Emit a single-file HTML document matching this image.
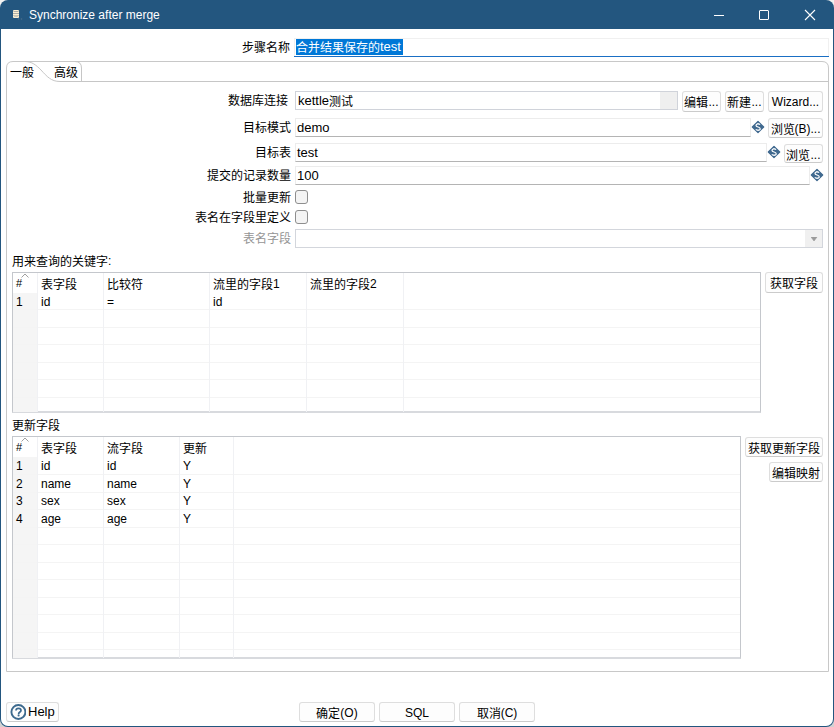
<!DOCTYPE html>
<html lang="zh-CN"><head><meta charset="utf-8"><style>
*{box-sizing:border-box;margin:0;padding:0}
html,body{width:834px;height:727px;overflow:hidden;background:linear-gradient(#f2f2f2,#d2d2d2)}
body{position:relative;font-family:"Liberation Sans",sans-serif;font-size:12px;color:#000}
.a{position:absolute}
.t{position:absolute;white-space:nowrap;line-height:16px}
.r{text-align:right}
.inp{position:absolute;background:#fff;border:1px solid #ececec;border-bottom-color:#b4b4b4}
.btn{position:absolute;background:#fdfdfd;border:1px solid #dedede;border-bottom-color:#cbcbcb;border-radius:3px;text-align:center;white-space:nowrap}
.btn>span{position:absolute;left:0;right:0;top:2px;line-height:16px}
.chk{position:absolute;width:13px;height:14px;border:1px solid #8e8e8e;border-radius:3px;background:#f4f4f4}
.grid{position:absolute;border:1px solid #c4c7cc;border-bottom:2px solid #d8dade;background:#fff;overflow:hidden}
.vl{position:absolute;width:1px;background:#f0f1f4}
.hl{position:absolute;height:1px;background:#f4f4f4}
.c{position:relative;top:1px}
</style></head><body>
<div class="a" style="left:0;top:0;width:834px;height:727px;background:#23567f;border-radius:8px"></div>
<div class="a" style="left:1px;top:29px;width:832px;height:697px;background:#fff;border-radius:0 0 7px 7px"></div>
<svg class="a" style="left:13px;top:10px" width="10" height="10" viewBox="0 0 10 10"><rect x="0" y="0" width="6" height="8" rx="1" fill="#fcefd2"/><rect x="0.5" y="1.3" width="5" height="0.7" fill="#8d949a"/><rect x="0" y="3.3" width="6" height="0.7" fill="#8d949a"/><rect x="0" y="5.3" width="6" height="0.6" fill="#a7aba9"/><path d="M1 6.2 Q3 7.2 5 6.2" stroke="#a7aba9" stroke-width="0.6" fill="none"/><circle cx="5.5" cy="9" r="0.8" fill="#4a6d8a"/><circle cx="8.5" cy="9" r="0.8" fill="#4a6d8a"/></svg>
<div class="t" style="left:29px;top:7px;color:#fff">Synchronize after merge</div>
<div class="a" style="left:714px;top:15px;width:10px;height:1px;background:#fff"></div>
<div class="a" style="left:759px;top:10px;width:10px;height:10px;border:1px solid #fff;border-radius:1px"></div>
<svg class="a" style="left:804px;top:9px" width="12" height="12" viewBox="0 0 12 12"><path d="M1 1L11 11M11 1L1 11" stroke="#fff" stroke-width="1.1"/></svg>
<div class="t r" style="right:544px;top:39px;color:#000"><span class="c">步骤名称</span></div>
<div class="a" style="left:294px;top:38px;width:535px;height:19px;border:1px solid #f0f0f0;border-bottom:none"></div>
<div class="a" style="left:294px;top:56px;width:535px;height:1px;background:#1a6fc4"></div>
<div class="t" style="left:296px;top:39px;background:#0078d7;color:#fff;line-height:16px;padding-right:2px"><span class="c">合并结果保存的</span><span style="font-size:13px">test</span></div>
<svg class="a" style="left:0;top:0" width="834" height="727">
<path d="M6.5 671.5 V68 Q6.5 61.5 13 61.5 H822 Q828.5 61.5 828.5 68 V671.5 Z" fill="none" stroke="#c8c8c8"/>
<path d="M25 61.5 C32 61.5 36 65 41 70 C47 76.5 51 81.5 60 81.5 H828.5" fill="none" stroke="#c6c6c6"/>
<path d="M75 61.5 Q81.5 61.5 81.5 68 V81.5" fill="none" stroke="#c6c6c6"/>
</svg>
<div class="t" style="left:10px;top:64px"><span class="c">一般</span></div>
<div class="t" style="left:54px;top:64px"><span class="c">高级</span></div>
<div class="t r" style="right:546px;top:92px;color:#000"><span class="c">数据库连接</span></div>
<div class="inp" style="left:295px;top:91px;width:383px;height:19px;border:1px solid #d0d3da"></div>
<div class="a" style="left:660px;top:92px;width:17px;height:17px;background:#efefef"></div>
<div class="t" style="left:298px;top:93px"><span style="font-size:13px">kettle</span><span class="c">测试</span></div>
<div class="btn" style="left:682px;top:91px;width:39px;height:21px"><span><span class="c">编辑</span>...</span></div>
<div class="btn" style="left:725px;top:91px;width:39px;height:21px"><span><span class="c">新建</span>...</span></div>
<div class="btn" style="left:768px;top:91px;width:55px;height:21px"><span>Wizard...</span></div>
<div class="t r" style="right:543px;top:119px;color:#000"><span class="c">目标模式</span></div>
<div class="inp" style="left:295px;top:118px;width:456px;height:19px;"></div>
<div class="t" style="left:297px;top:120px;font-size:13px">demo</div>
<svg class="a" style="left:751px;top:120px" width="14" height="14" viewBox="0 0 14 14"><path d="M7 1.3 L12.7 7 L7 12.7 L1.3 7 Z" fill="#40698f" stroke="#40698f" stroke-width="1.2" stroke-linejoin="round"/><path d="M9 4.7 C8.6 4.1 8 3.9 7 3.9 C5.8 3.9 5 4.6 5 5.4 C5 7.4 9.2 6.6 9.2 8.7 C9.2 9.7 8.3 10.2 7 10.2 C6 10.2 5.3 9.9 4.8 9.3 M7 3 V3.9 M7 10.2 V11" fill="none" stroke="#fff" stroke-width="1.2"/></svg>
<div class="btn" style="left:768px;top:118px;width:55px;height:20px"><span><span class="c">浏览</span>(B)...</span></div>
<div class="t r" style="right:543px;top:144px;color:#000"><span class="c">目标表</span></div>
<div class="inp" style="left:295px;top:143px;width:472px;height:19px;"></div>
<div class="t" style="left:297px;top:145px;font-size:13px">test</div>
<svg class="a" style="left:767px;top:145px" width="14" height="14" viewBox="0 0 14 14"><path d="M7 1.3 L12.7 7 L7 12.7 L1.3 7 Z" fill="#40698f" stroke="#40698f" stroke-width="1.2" stroke-linejoin="round"/><path d="M9 4.7 C8.6 4.1 8 3.9 7 3.9 C5.8 3.9 5 4.6 5 5.4 C5 7.4 9.2 6.6 9.2 8.7 C9.2 9.7 8.3 10.2 7 10.2 C6 10.2 5.3 9.9 4.8 9.3 M7 3 V3.9 M7 10.2 V11" fill="none" stroke="#fff" stroke-width="1.2"/></svg>
<div class="btn" style="left:784px;top:144px;width:39px;height:19px"><span><span class="c">浏览</span>...</span></div>
<div class="t r" style="right:543px;top:167px;color:#000"><span class="c">提交的记录数量</span></div>
<div class="inp" style="left:295px;top:166px;width:515px;height:19px;"></div>
<div class="t" style="left:297px;top:168px;font-size:13px">100</div>
<svg class="a" style="left:810px;top:168px" width="14" height="14" viewBox="0 0 14 14"><path d="M7 1.3 L12.7 7 L7 12.7 L1.3 7 Z" fill="#40698f" stroke="#40698f" stroke-width="1.2" stroke-linejoin="round"/><path d="M9 4.7 C8.6 4.1 8 3.9 7 3.9 C5.8 3.9 5 4.6 5 5.4 C5 7.4 9.2 6.6 9.2 8.7 C9.2 9.7 8.3 10.2 7 10.2 C6 10.2 5.3 9.9 4.8 9.3 M7 3 V3.9 M7 10.2 V11" fill="none" stroke="#fff" stroke-width="1.2"/></svg>
<div class="t r" style="right:543px;top:189px;color:#000"><span class="c">批量更新</span></div>
<div class="chk" style="left:295px;top:190px"></div>
<div class="t r" style="right:543px;top:209px;color:#000"><span class="c">表名在字段里定义</span></div>
<div class="chk" style="left:295px;top:210px"></div>
<div class="t r" style="right:543px;top:230px;color:#959595"><span class="c">表名字段</span></div>
<div class="a" style="left:295px;top:229px;width:528px;height:19px;border:1px solid #d3d6dc;background:#fff"></div>
<div class="a" style="left:805px;top:230px;width:17px;height:17px;background:#f0f0f0"></div>
<svg class="a" style="left:811px;top:237px" width="7" height="5"><path d="M0 0H6L3 4Z" fill="#9a9a9a" stroke="#9a9a9a" stroke-width="0.6" stroke-linejoin="round"/></svg>
<div class="t" style="left:12px;top:253px"><span class="c">用来查询的关键字</span>:</div>
<div class="grid" style="left:12px;top:272px;width:749px;height:141px"></div>
<div class="a" style="left:13px;top:293px;width:24px;height:119px;background:#f5f5f5"></div>
<div class="hl" style="left:13px;top:309px;width:747px"></div>
<div class="hl" style="left:13px;top:327px;width:747px"></div>
<div class="hl" style="left:13px;top:344px;width:747px"></div>
<div class="hl" style="left:13px;top:362px;width:747px"></div>
<div class="hl" style="left:13px;top:379px;width:747px"></div>
<div class="hl" style="left:13px;top:397px;width:747px"></div>
<div class="vl" style="left:37px;top:273px;height:139px"></div>
<div class="vl" style="left:103px;top:273px;height:139px"></div>
<div class="vl" style="left:209px;top:273px;height:139px"></div>
<div class="vl" style="left:306px;top:273px;height:139px"></div>
<div class="vl" style="left:403px;top:273px;height:139px"></div>
<div class="t" style="left:16px;top:275px;font-size:11px">#</div>
<div class="t" style="left:41px;top:276px"><span class="c">表字段</span></div>
<div class="t" style="left:107px;top:276px"><span class="c">比较符</span></div>
<div class="t" style="left:213px;top:276px"><span class="c">流里的字段</span>1</div>
<div class="t" style="left:310px;top:276px"><span class="c">流里的字段</span>2</div>
<svg class="a" style="left:21px;top:273px" width="8" height="5"><path d="M0.5 4.5 L4 1 L7.5 4.5" fill="none" stroke="#888" stroke-width="0.8"/></svg>
<div class="t" style="left:16px;top:294px">1</div>
<div class="t" style="left:41px;top:294px">id</div>
<div class="t" style="left:107px;top:294px">=</div>
<div class="t" style="left:213px;top:294px">id</div>
<div class="btn" style="left:765px;top:272px;width:58px;height:21px"><span><span class="c">获取字段</span></span></div>
<div class="t" style="left:12px;top:417px"><span class="c">更新字段</span></div>
<div class="grid" style="left:12px;top:436px;width:729px;height:223px"></div>
<div class="a" style="left:13px;top:457px;width:24px;height:201px;background:#f5f5f5"></div>
<div class="hl" style="left:13px;top:474px;width:727px"></div>
<div class="hl" style="left:13px;top:492px;width:727px"></div>
<div class="hl" style="left:13px;top:509px;width:727px"></div>
<div class="hl" style="left:13px;top:527px;width:727px"></div>
<div class="hl" style="left:13px;top:544px;width:727px"></div>
<div class="hl" style="left:13px;top:562px;width:727px"></div>
<div class="hl" style="left:13px;top:579px;width:727px"></div>
<div class="hl" style="left:13px;top:597px;width:727px"></div>
<div class="hl" style="left:13px;top:614px;width:727px"></div>
<div class="hl" style="left:13px;top:632px;width:727px"></div>
<div class="hl" style="left:13px;top:649px;width:727px"></div>
<div class="vl" style="left:37px;top:437px;height:221px"></div>
<div class="vl" style="left:103px;top:437px;height:221px"></div>
<div class="vl" style="left:179px;top:437px;height:221px"></div>
<div class="vl" style="left:233px;top:437px;height:221px"></div>
<div class="t" style="left:16px;top:439px;font-size:11px">#</div>
<div class="t" style="left:41px;top:440px"><span class="c">表字段</span></div>
<div class="t" style="left:107px;top:440px"><span class="c">流字段</span></div>
<div class="t" style="left:183px;top:440px"><span class="c">更新</span></div>
<svg class="a" style="left:21px;top:437px" width="8" height="5"><path d="M0.5 4.5 L4 1 L7.5 4.5" fill="none" stroke="#888" stroke-width="0.8"/></svg>
<div class="t" style="left:16px;top:458px">1</div>
<div class="t" style="left:41px;top:458px">id</div>
<div class="t" style="left:107px;top:458px">id</div>
<div class="t" style="left:183px;top:458px">Y</div>
<div class="t" style="left:16px;top:476px">2</div>
<div class="t" style="left:41px;top:476px">name</div>
<div class="t" style="left:107px;top:476px">name</div>
<div class="t" style="left:183px;top:476px">Y</div>
<div class="t" style="left:16px;top:493px">3</div>
<div class="t" style="left:41px;top:493px">sex</div>
<div class="t" style="left:107px;top:493px">sex</div>
<div class="t" style="left:183px;top:493px">Y</div>
<div class="t" style="left:16px;top:511px">4</div>
<div class="t" style="left:41px;top:511px">age</div>
<div class="t" style="left:107px;top:511px">age</div>
<div class="t" style="left:183px;top:511px">Y</div>
<div class="btn" style="left:745px;top:437px;width:78px;height:20px"><span><span class="c">获取更新字段</span></span></div>
<div class="btn" style="left:769px;top:462px;width:54px;height:20px"><span><span class="c">编辑映射</span></span></div>
<div class="btn" style="left:6px;top:702px;width:53px;height:20px"></div>
<svg class="a" style="left:10px;top:704px" width="16" height="16" viewBox="0 0 16 16"><circle cx="8.4" cy="8" r="7" fill="none" stroke="#3d6a8e" stroke-width="1.9"/><path d="M6 6.6 C6 5.1 7 4.3 8.5 4.3 C10 4.3 11 5.2 11 6.4 C11 8 8.6 8.1 8.6 9.9" fill="none" stroke="#3d6a8e" stroke-width="1.7"/><circle cx="8.6" cy="11.4" r="1.05" fill="#3d6a8e"/></svg>
<div class="t" style="left:28px;top:704px;font-size:13px">Help</div>
<div class="btn" style="left:299px;top:702px;width:76px;height:20px"><span><span class="c">确定</span>(O)</span></div>
<div class="btn" style="left:379px;top:702px;width:76px;height:20px"><span>SQL</span></div>
<div class="btn" style="left:459px;top:702px;width:76px;height:20px"><span><span class="c">取消</span>(C)</span></div>
</body></html>
